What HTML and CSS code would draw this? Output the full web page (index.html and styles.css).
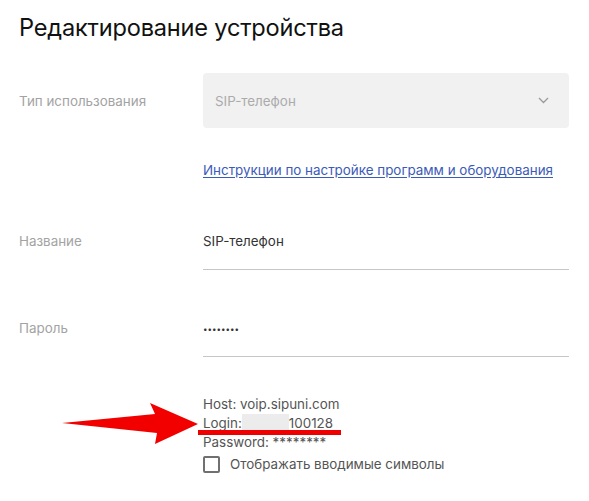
FILE: index.html
```html
<!DOCTYPE html>
<html lang="ru">
<head>
    <meta charset="UTF-8">
    <meta name="viewport" content="width=device-width, initial-scale=1.0">
    <title>Редактирование устройства</title>
    <link rel="stylesheet" href="styles.css">
</head>
<body>
    <div class="page">
        <h1>Редактирование устройства</h1>

        <div class="form">
            <div class="row row-select">
                <label class="label">Тип использования</label>
                <div class="select">
                    <span>SIP-телефон</span>
                    <svg class="chevron" width="11" height="7" viewBox="0 0 11 7">
                        <path d="M1 1 L5.5 5.5 L10 1" fill="none" stroke="#9a9a9a" stroke-width="1.3"/>
                    </svg>
                </div>
            </div>

            <div class="row row-link">
                <span></span>
                <a href="#" class="help-link">Инструкции по настройке программ и оборудования</a>
            </div>

            <div class="row row-input row-name">
                <label class="label">Название</label>
                <div class="field">SIP-телефон</div>
            </div>

            <div class="row row-input row-pass">
                <label class="label">Пароль</label>
                <div class="field field-pass">••••••••</div>
            </div>

            <div class="row row-info">
                <span></span>
                <div class="info">
                    <div>Host: voip.sipuni.com</div>
                    <div class="login">Login:<span class="blur"></span>100128</div>
                    <div>Password: ********</div>
                    <label class="check">
                        <span class="box"></span>
                        Отображать вводимые символы
                    </label>
                    <span class="mark"></span>
                </div>
            </div>
        </div>

        <svg class="arrow" width="170" height="60" viewBox="40 400 170 60">
            <defs>
                <filter id="soft" x="-10%" y="-30%" width="120%" height="160%">
                    <feGaussianBlur stdDeviation="0.6"/>
                </filter>
            </defs>
            <path d="M62 423 L155 414 L150 403 L198 424 L155 444 L157 433 Z" fill="#f20000" filter="url(#soft)"/>
        </svg>
    </div>
</body>
</html>
```

FILE: styles.css
```css
* { margin: 0; padding: 0; box-sizing: border-box; }

body {
    background: #fff;
    font-family: 'Inter', sans-serif;
    color: #333;
}

.page {
    position: relative;
    padding: 12px 20px 0 19px;
}

h1 {
    font-size: 23.6px;
    font-weight: 400;
    color: #111;
    letter-spacing: -0.2px;
    line-height: 32px;
}

.form {
    margin-top: 29px;
}

.row {
    display: grid;
    grid-template-columns: 184px 366px;
    align-items: center;
}

.label {
    font-size: 13.4px;
    color: #a3a3a3;
}

.select {
    height: 55px;
    background: #f1f1f1;
    border-radius: 4px;
    display: flex;
    align-items: center;
    justify-content: space-between;
    padding: 0 20px 0 12px;
    font-size: 13.4px;
    color: #ababab;
}

.row-link {
    margin-top: 34px;
}

.help-link {
    font-size: 13.4px;
    color: #3b5bb8;
    text-decoration: underline;
    text-underline-offset: 2px;
}

.row-input {
    align-items: start;
}

.row-input .label {
    padding-top: 2px;
}

.row-name {
    margin-top: 53px;
}

.row-pass {
    margin-top: 48px;
}

.field {
    font-size: 13.4px;
    color: #333;
    padding-top: 2px;
    height: 39px;
    border-bottom: 1px solid #c6c6c6;
}

.field-pass {
    font-size: 8px;
    padding-top: 6px;
}

.row-info {
    margin-top: 38px;
    align-items: start;
}

.info {
    position: relative;
    font-size: 13.4px;
    color: #555;
    line-height: 19px;
}

.login {
    display: flex;
    align-items: center;
}

.blur {
    display: inline-block;
    width: 47px;
    height: 19px;
    background: #ececec;
}

.check {
    display: flex;
    align-items: center;
    gap: 10px;
    margin-top: 3px;
}

.box {
    width: 17px;
    height: 17px;
    border: 2px solid #707070;
    border-radius: 2px;
}

.mark {
    position: absolute;
    left: -5px;
    top: 35px;
    width: 143px;
    height: 5px;
    background: #ee0000;
}

.arrow {
    position: absolute;
    left: 40px;
    top: 400px;
}
```
